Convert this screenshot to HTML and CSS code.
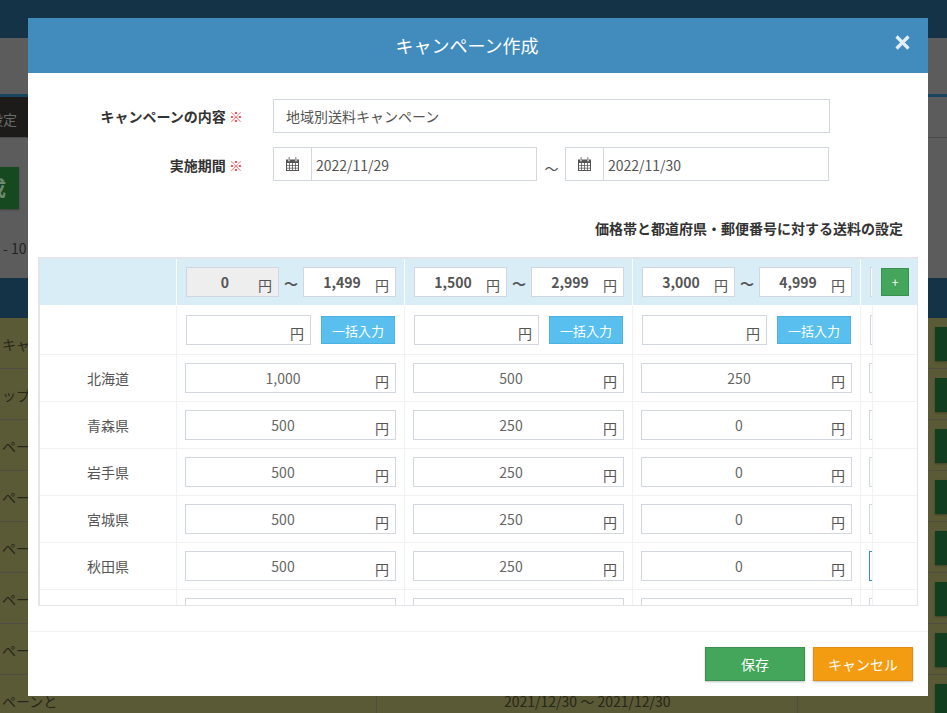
FILE: index.html
```html
<!DOCTYPE html>
<html lang="ja">
<head>
<meta charset="utf-8">
<title>キャンペーン作成</title>
<link rel="stylesheet" href="styles.css">
</head>
<body>
<div class="page">
  <div class="nav"></div>
  <div class="subhead"></div>
  <div class="tabs"><div class="tab">設定</div></div>
  <div class="actions"><div class="new-btn">成</div></div>
  <div class="pager"><span>1 - 10</span></div>
  <div class="list-head"></div>
  <div class="list-row"><div class="c1">キャンペーン</div><div class="c2"></div><div class="c3"><i class="go"></i></div></div>
  <div class="list-row"><div class="c1">ップ</div><div class="c2"></div><div class="c3"><i class="go"></i></div></div>
  <div class="list-row"><div class="c1">ペー</div><div class="c2"></div><div class="c3"><i class="go"></i></div></div>
  <div class="list-row"><div class="c1">ペー</div><div class="c2"></div><div class="c3"><i class="go"></i></div></div>
  <div class="list-row"><div class="c1">ペー</div><div class="c2"></div><div class="c3"><i class="go"></i></div></div>
  <div class="list-row"><div class="c1">ペー</div><div class="c2"></div><div class="c3"><i class="go"></i></div></div>
  <div class="list-row"><div class="c1">ペー</div><div class="c2"></div><div class="c3"><i class="go"></i></div></div>
  <div class="list-row"><div class="c1">ペーンと</div><div class="c2">2021/12/30 〜 2021/12/30</div><div class="c3"><i class="go"></i></div></div>
</div>

<div class="modal">
  <div class="modal-head">
    <div class="modal-title">キャンペーン作成</div>
    <svg class="close" viewBox="0 0 15 15" width="15" height="15"><path d="M1.5 1.5 13.5 13.5M13.5 1.5 1.5 13.5"/></svg>
  </div>
  <div class="modal-body">
    <div class="form-row">
      <div class="form-label">キャンペーンの内容 <span class="req">※</span></div>
      <div class="text-input">地域別送料キャンペーン</div>
    </div>
    <div class="form-row">
      <div class="form-label">実施期間 <span class="req">※</span></div>
      <div class="dates">
        <div class="date">
          <div class="addon"><svg class="cal" viewBox="0 0 13 14" width="13" height="14"><path d="M0 2.5h2.2V4.2h1.6V2.5h5.4V4.2h1.6V2.5H13V14H0ZM1 6v2h2.2V6ZM4 6v2h2.1V6ZM6.9 6v2H9V6ZM9.8 6v2H12V6ZM1 8.8v2h2.2v-2ZM4 8.8v2h2.1v-2ZM6.9 8.8v2H9v-2ZM9.8 8.8v2H12v-2ZM1 11.6V13h2.2v-1.4ZM4 11.6V13h2.1v-1.4ZM6.9 11.6V13H9v-1.4ZM9.8 11.6V13H12v-1.4ZM2.7 0h.8v3.6h-.8ZM9.5 0h.8v3.6h-.8Z" fill-rule="evenodd"/></svg></div>
          <div class="date-val">2022/11/29</div>
        </div>
        <div class="date-sep">〜</div>
        <div class="date">
          <div class="addon"><svg class="cal" viewBox="0 0 13 14" width="13" height="14"><path d="M0 2.5h2.2V4.2h1.6V2.5h5.4V4.2h1.6V2.5H13V14H0ZM1 6v2h2.2V6ZM4 6v2h2.1V6ZM6.9 6v2H9V6ZM9.8 6v2H12V6ZM1 8.8v2h2.2v-2ZM4 8.8v2h2.1v-2ZM6.9 8.8v2H9v-2ZM9.8 8.8v2H12v-2ZM1 11.6V13h2.2v-1.4ZM4 11.6V13h2.1v-1.4ZM6.9 11.6V13H9v-1.4ZM9.8 11.6V13H12v-1.4ZM2.7 0h.8v3.6h-.8ZM9.5 0h.8v3.6h-.8Z" fill-rule="evenodd"/></svg></div>
          <div class="date-val">2022/11/30</div>
        </div>
      </div>
    </div>
    <div class="section-title">価格帯と都道府県・郵便番号に対する送料の設定</div>

    <div class="grid-wrap">
      <div class="scroll">
        <div class="row row-head">
          <div class="label"></div>
          <div class="cell cell-range"><div class="field range locked"><span>0</span><em>円</em></div><b class="wave">〜</b><div class="field range"><span>1,499</span><em>円</em></div></div>
          <div class="cell cell-range"><div class="field range"><span>1,500</span><em>円</em></div><b class="wave">〜</b><div class="field range"><span>2,999</span><em>円</em></div></div>
          <div class="cell cell-range"><div class="field range"><span>3,000</span><em>円</em></div><b class="wave">〜</b><div class="field range"><span>4,999</span><em>円</em></div></div>
          <div class="cell cell-range"><div class="field range"></div></div>
        </div>
        <div class="row row-bulk">
          <div class="label"></div>
          <div class="cell cell-bulk"><div class="field bulk"><em>円</em></div><div class="bulk-btn">一括入力</div></div>
          <div class="cell cell-bulk"><div class="field bulk"><em>円</em></div><div class="bulk-btn">一括入力</div></div>
          <div class="cell cell-bulk"><div class="field bulk"><em>円</em></div><div class="bulk-btn">一括入力</div></div>
          <div class="cell cell-bulk"><div class="field bulk"></div></div>
        </div>
        <div class="row">
          <div class="label">北海道</div>
          <div class="cell"><div class="field"><span>1,000</span><em>円</em></div></div>
          <div class="cell"><div class="field"><span>500</span><em>円</em></div></div>
          <div class="cell"><div class="field"><span>250</span><em>円</em></div></div>
          <div class="cell"><div class="field"></div></div>
        </div>
        <div class="row">
          <div class="label">青森県</div>
          <div class="cell"><div class="field"><span>500</span><em>円</em></div></div>
          <div class="cell"><div class="field"><span>250</span><em>円</em></div></div>
          <div class="cell"><div class="field"><span>0</span><em>円</em></div></div>
          <div class="cell"><div class="field"></div></div>
        </div>
        <div class="row">
          <div class="label">岩手県</div>
          <div class="cell"><div class="field"><span>500</span><em>円</em></div></div>
          <div class="cell"><div class="field"><span>250</span><em>円</em></div></div>
          <div class="cell"><div class="field"><span>0</span><em>円</em></div></div>
          <div class="cell"><div class="field"></div></div>
        </div>
        <div class="row">
          <div class="label">宮城県</div>
          <div class="cell"><div class="field"><span>500</span><em>円</em></div></div>
          <div class="cell"><div class="field"><span>250</span><em>円</em></div></div>
          <div class="cell"><div class="field"><span>0</span><em>円</em></div></div>
          <div class="cell"><div class="field"></div></div>
        </div>
        <div class="row">
          <div class="label">秋田県</div>
          <div class="cell"><div class="field"><span>500</span><em>円</em></div></div>
          <div class="cell"><div class="field"><span>250</span><em>円</em></div></div>
          <div class="cell"><div class="field"><span>0</span><em>円</em></div></div>
          <div class="cell"><div class="field focused"></div></div>
        </div>
        <div class="row">
          <div class="label"></div>
          <div class="cell"><div class="field"></div></div>
          <div class="cell"><div class="field"></div></div>
          <div class="cell"><div class="field"></div></div>
          <div class="cell"><div class="field"></div></div>
        </div>
      </div>
      <div class="fixed">
        <div class="fix-head"><div class="add-btn">+</div></div>
        <div class="fix-bulk"></div>
        <div class="fix-row"></div>
        <div class="fix-row"></div>
        <div class="fix-row"></div>
        <div class="fix-row"></div>
        <div class="fix-row"></div>
        <div class="fix-row"></div>
      </div>
    </div>
  </div>
  <div class="modal-foot">
    <div class="btn save">保存</div>
    <div class="btn cancel">キャンセル</div>
  </div>
</div>
</body>
</html>
```

FILE: styles.css
```css
* { box-sizing: border-box; }
html, body { margin: 0; padding: 0; height: 713px; overflow: hidden; }
body {
  font-family: "Noto Sans CJK JP", "Noto Sans", sans-serif;
  font-size: 14px;
  color: #555;
  background: #5c5c5c;
  position: relative;
}

/* dimmed page behind the dialog */
.page { height: 713px; overflow: hidden; background: #5c5c5c; color: #2b2b22; }
.nav { height: 38px; background: #143347; }
.subhead { height: 56px; background: #5c5c5c; }
.tabs { height: 44px; border-top: 3px solid #1a4560; border-bottom: 1px solid #4a4a4a; display: flex; }
.tab {
  height: 40px; background: #1c1b19; color: #6a6a68;
  display: flex; align-items: center; justify-content: flex-end;
  white-space: nowrap; font-size: 14px;
  width: 28px; padding: 3px 11px 0 0;
}
.actions { height: 71px; padding-top: 29px; }
.new-btn {
  width: 19px; height: 42px; background: #16491f; color: #6d8a73;
  font-size: 20px; font-weight: 700; line-height: 42px; overflow: hidden;
  box-shadow: 0 1px 2px rgba(0,0,0,.3);
  display: flex; justify-content: flex-end; white-space: nowrap;
  padding-right: 13px;
}
.pager { height: 69px; color: #232323; font-size: 14px; line-height: 20px; padding-top: 29px; }
.pager span { display: block; margin-left: -8px; white-space: nowrap; }
.list-head { height: 40px; background: #143347; }
.list-row {
  height: 51px; background: #5b5a36; border-bottom: 1px solid #4e4e42;
  display: flex;
}
.c1 { width: 376px; padding: 16px 0 0 2px; line-height: 20px; color: #26261a; white-space: nowrap; overflow: hidden; }
.c2 { width: 421px; border-left: 1px solid #4e4e42; padding: 16px 0 0 127px; line-height: 20px; color: #26261a; white-space: nowrap; }
.c3 { flex: 1; border-left: 1px solid #4e4e42; padding: 9px 0 0 137px; }
.go { display: block; height: 34px; background: #133d1f; box-shadow: 0 1px 2px rgba(0,0,0,.3); }

/* dialog */
.modal {
  position: absolute; left: 28px; top: 18px;
  width: 900px; height: 678px;
  background: #fff;
  display: flex; flex-direction: column;
}
.modal-head {
  height: 55px; background: #418cbd; color: #fff;
  display: flex; align-items: center; justify-content: center;
  position: relative; flex: none;
  padding-right: 22px;
}
.modal-title { font-size: 18px; line-height: 24px; margin-top: -1px; }
.close {
  position: absolute; left: 867px; top: 17px;
  fill: none; stroke: #e3edf5; stroke-width: 3.2;
}
.modal-body { flex: 1; padding: 26px 10px 0; min-height: 0; }
.form-row { display: flex; align-items: center; margin-bottom: 15px; height: 34px; }
.form-label {
  width: 205px; flex: none; text-align: right; font-weight: 700; color: #333;
  margin-right: 30px; white-space: nowrap;
}
.req { color: #e8363a; font-weight: 400; }
.text-input {
  width: 557px; height: 34px; border: 1px solid #d2d6de; color: #555;
  padding: 0 12px; line-height: 32px;
}
.dates { display: flex; }
.date { width: 264px; height: 34px; border: 1px solid #d2d6de; display: flex; }
.addon {
  width: 38px; flex: none; border-right: 1px solid #d2d6de;
  display: flex; align-items: center; justify-content: center;
}
.cal { fill: #555; display: block; }
.date-val { padding-left: 4px; line-height: 34px; color: #555; }
.date-sep { width: 28px; text-align: center; line-height: 32px; padding: 5px 0 0 1px; font-size: 14px; color: #555; }
.section-title {
  margin-top: 36px; height: 20px; line-height: 20px;
  text-align: right; padding-right: 15px; font-weight: 700; color: #333;
}
.grid-wrap {
  margin-top: 19px; height: 349px; width: 880px;
  border-style: solid; border-color: #e4e5ea; border-width: 2px 1px 1px 2px;
  display: flex; overflow: hidden; background: #fff;
}
.scroll { width: 832px; flex: none; overflow: hidden; }
.row { display: flex; width: 1049px; height: 47px; border-bottom: 1px solid #f1f2f4; }
.row-head { height: 47px; background: #d9edf6; border-bottom: 1px solid #fff; }
.row-bulk { height: 49px; }
.label {
  width: 137px; flex: none; border-right: 1px solid #f1f2f4;
  text-align: center; line-height: 46px; color: #555;
}
.row-head .label, .row-head .cell { border-right-color: #fff; }
.cell {
  width: 228px; flex: none; border-right: 1px solid #f1f2f4;
  padding: 8px 8px 0;
}
.cell-range { display: flex; padding: 8px 8px 0 9px; }
.cell-bulk { display: flex; padding: 9px 9px 0; gap: 10px; }
.field {
  position: relative; height: 30px; border: 1px solid #d2d6de; background: #fff;
  text-align: center; padding-right: 15px; line-height: 28px; color: #666;
}
.field em {
  position: absolute; right: 6px; top: 3px; font-style: normal; line-height: 28px; color: #555;
}
.range { width: 93px; flex: none; font-weight: 700; color: #555; }
.range em { font-weight: 400; top: 3px; right: 6px; }
.locked { background: #eee; }
.wave { width: 24px; flex: none; text-align: center; color: #555; line-height: 30px; padding-top: 1px; }
.bulk { width: 125px; flex: none; }
.bulk em { top: 3px; }
.bulk-btn {
  width: 74px; height: 28px; margin-top: 1px; flex: none;
  background: #58bfef; border: 1px solid #4bb1df; color: #fff;
  font-size: 13px; line-height: 27px; text-align: center;
}
.focused { border-color: #3c8dbc; }
.fixed { flex: 1; min-width: 0; }
.fix-head { height: 47px; background: #d9edf6; border-bottom: 1px solid #fff; padding: 9px 0 0 9px; }
.add-btn {
  width: 28px; height: 28px; background: #43a65a; border: 1px solid #3c8f50;
  color: #fff; font-size: 12px; line-height: 25px; text-align: center;
}
.fix-bulk { height: 49px; border-left: 1px solid #f1f2f4; border-bottom: 1px solid #f1f2f4; }
.fix-row { height: 47px; border-left: 1px solid #f1f2f4; border-bottom: 1px solid #f1f2f4; }
.modal-foot {
  flex: none; height: 65px; border-top: 1px solid #f4f4f4;
  display: flex; justify-content: flex-end; gap: 8px;
  padding: 15px 15px 0;
}
.btn {
  width: 100px; height: 34px; color: #fff; text-align: center; line-height: 32px;
  border: 1px solid transparent; box-shadow: 0 1px 2px rgba(0,0,0,.25);
}
.save { background: #43a65a; border-color: #3c8f50; }
.cancel { background: #f39c12; border-color: #e08e0b; }
```
